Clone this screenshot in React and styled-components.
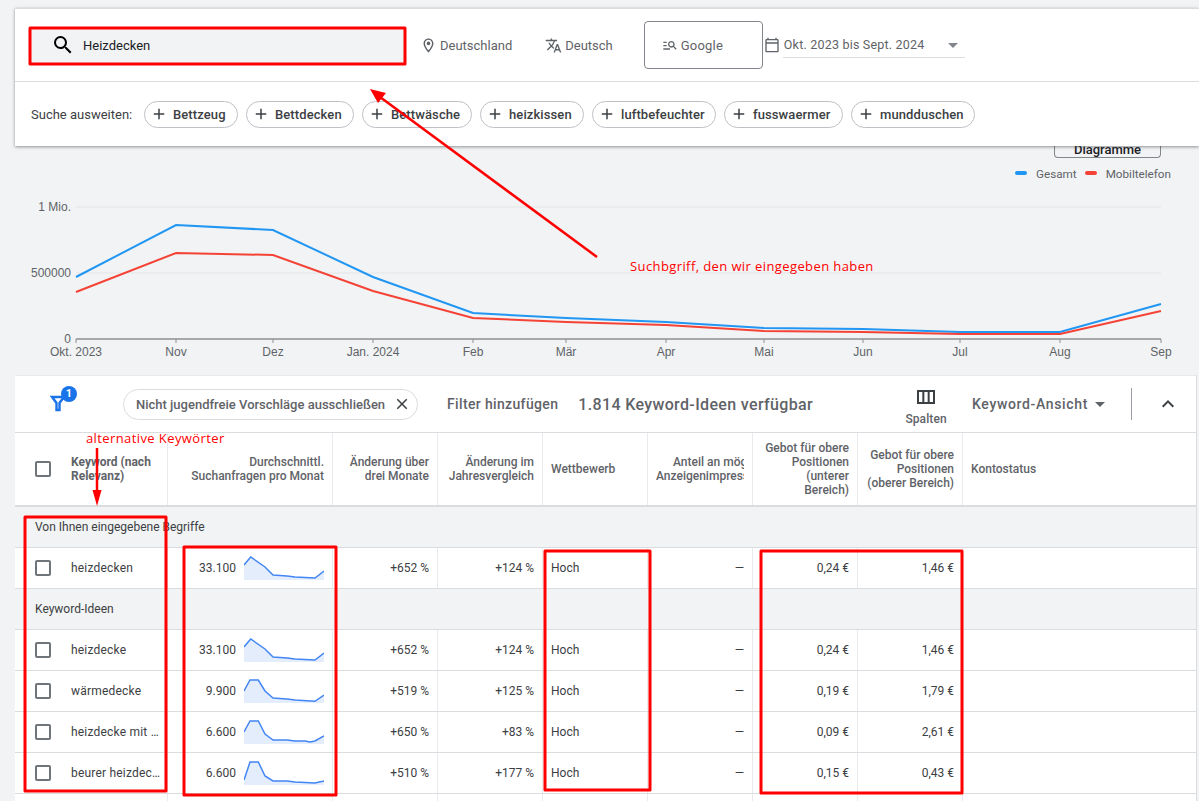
import React from 'react';
import styled, { createGlobalStyle } from 'styled-components';
import {
  MdSearch,
  MdOutlineLocationOn,
  MdOutlineTranslate,
  MdManageSearch,
  MdOutlineCalendarToday,
  MdArrowDropDown,
  MdAdd,
  MdClose,
  MdOutlineViewColumn,
  MdKeyboardArrowUp,
} from 'react-icons/md';

const GlobalStyle = createGlobalStyle`
  html, body {
    margin: 0;
    padding: 0;
    background: #f1f3f4;
    height: 100%;
    overflow: hidden;
  }
  * { box-sizing: border-box; }
`;

const Page = styled.div`
  position: relative;
  width: 1199px;
  height: 801px;
  overflow: hidden;
  padding: 8px 0 0 15px;
  font-family: Roboto, "Liberation Sans", sans-serif;
  color: #3c4043;
`;

const Header = styled.header`
  position: relative;
  z-index: 2;
  background: #fff;
  border-top: 1px solid #dadce0;
  box-shadow: 0 1px 3px rgba(60, 64, 67, 0.55);
`;

const TopRow = styled.div`
  display: flex;
  align-items: center;
  height: 73px;
  border-bottom: 1px solid #dadce0;
`;

const SearchBox = styled.div`
  display: flex;
  align-items: center;
  width: 375px;
  height: 36px;
  margin-left: 15px;
  padding-left: 21px;
  gap: 8px;
  background: #f1f3f4;
  font-size: 13px;
  color: #202124;
  svg { font-size: 24px; color: #000; }
`;

const Setting = styled.div`
  display: flex;
  align-items: center;
  gap: ${(p) => p.$gap}px;
  margin-left: ${(p) => p.$left}px;
  font-size: 13px;
  color: #5f6368;
  svg { font-size: 17px; }
`;

const NetworkBox = styled.div`
  display: flex;
  align-items: center;
  gap: 3px;
  width: 119px;
  height: 48px;
  margin-left: 31px;
  padding-left: 17px;
  border: 1px solid #80868b;
  border-radius: 4px;
  font-size: 13px;
  letter-spacing: 0.2px;
  color: #5f6368;
  svg { font-size: 16px; }
`;

const CalendarIcon = styled.div`
  display: flex;
  margin-left: 1px;
  color: #5f6368;
  font-size: 16px;
`;

const DateSelect = styled.div`
  display: flex;
  align-items: center;
  justify-content: space-between;
  width: 182px;
  height: 26px;
  margin-left: 3px;
  padding-left: 1px;
  border-bottom: 1px solid #dadce0;
  font-size: 12.5px;
  letter-spacing: 0.2px;
  color: #5f6368;
  svg { font-size: 24px; color: #80868b; }
`;

const ChipRow = styled.div`
  display: flex;
  align-items: center;
  height: 64px;
  padding-left: 16px;
  gap: 8px;
`;

const ChipLabel = styled.span`
  width: 105px;
  font-size: 13px;
  color: #3c4043;
  white-space: nowrap;
`;

const Chip = styled.div`
  display: flex;
  align-items: center;
  height: 27px;
  width: ${(p) => p.$w}px;
  padding-left: 5px;
  gap: 5px;
  border: 1px solid #bdc1c6;
  border-radius: 14px;
  font-size: 13px;
  font-weight: 500;
  letter-spacing: 0.1px;
  white-space: nowrap;
  color: #3c4043;
  svg { font-size: 18px; flex: none; }
`;

const ChartSection = styled.section`
  position: relative;
  height: 228px;
`;

const DiagramButton = styled.div`
  position: absolute;
  right: 38px;
  top: -3px;
  width: 107px;
  height: 15px;
  border: 1px solid #80868b;
  border-top: 0;
  border-radius: 0 0 4px 4px;
  text-align: center;
  font-size: 13px;
  font-weight: 500;
  line-height: 13px;
  color: #202124;
`;

const ChartSvg = styled.svg`
  display: block;
  margin-left: -15px;
  font-family: "Liberation Sans", Arial, sans-serif;
  font-size: 12px;
  fill: #5f6368;
`;

const Legend = styled.div`
  position: absolute;
  top: 21px;
  right: 28px;
  display: flex;
  align-items: center;
  font-size: 11.7px;
  color: #5f6368;
`;

const LegendDot = styled.i`
  display: block;
  width: 12px;
  height: 4px;
  border-radius: 2px;
  margin: 0 9px 2px 8px;
  background: ${(p) => p.$color};
`;

const TablePanel = styled.section`
  margin: 1px 2px 0 0;
  border-right: 1px solid #dadce0;
`;

const Toolbar = styled.div`
  display: flex;
  align-items: center;
  height: 58px;
  background: #fff;
  border-top: 1px solid #e8eaed;
  border-bottom: 1px solid #dadce0;
`;

const FilterIcon = styled.div`
  position: relative;
  width: 30px;
  height: 32px;
  margin-left: 35px;
`;

const Badge = styled.span`
  position: absolute;
  left: 11px;
  top: -2px;
  width: 16px;
  height: 16px;
  border-radius: 50%;
  background: #1a73e8;
  color: #fff;
  font-size: 11px;
  font-weight: 700;
  line-height: 16px;
  text-align: center;
`;

const FilterChip = styled.div`
  display: flex;
  align-items: center;
  justify-content: space-between;
  width: 295px;
  height: 31px;
  margin-left: 43px;
  padding: 0 6px 0 12px;
  border: 1px solid #dadce0;
  border-radius: 16px;
  font-size: 13px;
  font-weight: 500;
  color: #5f6368;
  white-space: nowrap;
  svg { font-size: 18px; color: #3c4043; flex: none; }
`;

const AddFilter = styled.span`
  margin-left: 29px;
  font-size: 14px;
  font-weight: 500;
  letter-spacing: 0.35px;
  color: #5f6368;
`;

const IdeaCount = styled.span`
  margin-left: 20px;
  font-size: 16px;
  font-weight: 500;
  letter-spacing: 0.35px;
  color: #5f6368;
`;

const ColumnsButton = styled.div`
  display: flex;
  flex-direction: column;
  align-items: center;
  margin: 2px 0 0 91px;
  width: 44px;
  font-size: 12px;
  font-weight: 500;
  letter-spacing: 0.1px;
  color: #5f6368;
  svg { font-size: 24px; color: #3c4043; margin-bottom: 3px; }
`;

const ViewSelect = styled.div`
  display: flex;
  align-items: center;
  margin-left: 24px;
  font-size: 14px;
  font-weight: 500;
  letter-spacing: 0.65px;
  color: #5f6368;
  svg { font-size: 24px; }
`;

const Divider = styled.div`
  width: 1px;
  height: 32px;
  margin-left: 19px;
  background: #9aa0a6;
`;

const CollapseIcon = styled.div`
  display: flex;
  margin-left: 24px;
  font-size: 24px;
  color: #3c4043;
`;

const Grid = styled.div`
  display: grid;
  grid-template-columns: 153px 165px 105px 105px 105px 105px 105px 105px 1fr;
  height: ${(p) => p.$h}px;
  background: #fff;
  border-bottom: ${(p) => (p.$thick ? '2px solid #dadce0' : '1px solid #dadce0')};
`;

const Cell = styled.div`
  display: flex;
  align-items: center;
  justify-content: ${(p) => (p.$right ? 'flex-end' : 'flex-start')};
  min-width: 0;
  padding: 0 8px;
  border-right: ${(p) => (p.$last ? 'none' : '1px solid #e8eaed')};
  font-size: 12px;
  color: #3c4043;
  overflow: hidden;
`;

const HeadCell = styled(Cell)`
  font-weight: 500;
  line-height: 14px;
  color: #5f6368;
  text-align: ${(p) => (p.$right ? 'right' : 'left')};
`;

const ClippedLabel = styled.span`
  display: block;
  width: 88px;
  flex: none;
  overflow: hidden;
  white-space: nowrap;
  text-align: left;
`;

const ClippedLine = styled.span`
  display: block;
  padding-left: ${(p) => p.$indent}px;
`;

const KeywordCell = styled(Cell)`
  padding: 0 0 0 20px;
  gap: 20px;
`;

const KeywordHead = styled(KeywordCell)`
  font-weight: 700;
  line-height: 14px;
  color: #5f6368;
`;

const KeywordText = styled.span`
  width: 90px;
  overflow: hidden;
  white-space: nowrap;
  text-overflow: ellipsis;
  letter-spacing: 0.2px;
`;

const Check = styled.span`
  flex: none;
  width: 16px;
  height: 16px;
  border: 2px solid #70757a;
  border-radius: 2px;
`;

const VolumeCell = styled(Cell)`
  gap: 8px;
  justify-content: flex-end;
`;

const Spark = styled.svg`
  display: block;
  flex: none;
`;

const GroupRow = styled.div`
  display: flex;
  align-items: center;
  height: 41px;
  padding-left: 20px;
  border-bottom: 1px solid #dadce0;
  font-size: 12px;
  color: #3c4043;
`;

const Overlay = styled.svg`
  position: absolute;
  left: 0;
  top: 0;
  z-index: 5;
  pointer-events: none;
`;

const Note = styled.text`
  font-family: "Open Sans", "DejaVu Sans", sans-serif;
  font-size: 13px;
  letter-spacing: 0.4px;
  fill: #f00;
`;

const months = [
  ['Okt. 2023', 76], ['Nov', 176], ['Dez', 273], ['Jan. 2024', 373], ['Feb', 473], ['Mär', 566],
  ['Apr', 666], ['Mai', 764], ['Jun', 863], ['Jul', 960], ['Aug', 1060], ['Sep', 1161],
];
const blue = [277, 225, 230, 277, 313, 318, 322, 328, 329, 332, 332, 304];
const red = [292, 253, 255, 291, 318, 322, 325, 331, 332, 334, 334, 311];
const toLine = (ys) => ys.map((y, i) => `${months[i][1]},${y - 146}`).join(' ');

const chips = [
  ['Bettzeug', 94], ['Bettdecken', 108], ['Bettwäsche', 110], ['heizkissen', 104],
  ['luftbefeuchter', 124], ['fusswaermer', 119], ['mundduschen', 124],
];

const sparkA = [[0, 9], [6.7, 1], [21, 11], [29, 19], [43, 20], [51, 21], [61, 21.5], [71, 22], [80, 15]];
const sparkB = [[0, 12], [6, 1], [14.3, 1], [21, 12], [29, 19], [43, 20], [51, 21], [71, 22.3], [80, 16]];
const sparkC = [[0, 12], [6, 1], [14.3, 1], [21, 14], [29, 20], [43, 20], [51, 21], [61, 21], [66, 22], [71, 21], [80, 16]];
const sparkD = [[0, 19], [6, 1], [14.3, 1], [21, 15], [29, 20], [43, 20], [51, 21], [71, 22], [80, 20]];

const rowTop = { keyword: 'heizdecken', volume: '33.100', spark: sparkA, three: '+652 %', year: '+124 %', low: '0,24 €', high: '1,46 €' };
const rows = [
  { keyword: 'heizdecke', volume: '33.100', spark: sparkA, three: '+652 %', year: '+124 %', low: '0,24 €', high: '1,46 €' },
  { keyword: 'wärmedecke', volume: '9.900', spark: sparkB, three: '+519 %', year: '+125 %', low: '0,19 €', high: '1,79 €' },
  { keyword: 'heizdecke mit timer', volume: '6.600', spark: sparkC, three: '+650 %', year: '+83 %', low: '0,09 €', high: '2,61 €' },
  { keyword: 'beurer heizdecke', volume: '6.600', spark: sparkD, three: '+510 %', year: '+177 %', low: '0,15 €', high: '0,43 €' },
];

const Sparkline = ({ points }) => {
  const line = points.map((p) => p.join(',')).join(' ');
  return (
    <Spark width="80" height="24" viewBox="0 0 80 24">
      <polygon points={`0,24 ${line} 80,24`} fill="#e4edfb" />
      <polyline points={line} fill="none" stroke="#4285f4" strokeWidth="1.5" />
    </Spark>
  );
};

const KeywordRow = ({ row }) => (
  <Grid $h={41}>
    <KeywordCell><Check /><KeywordText>{row.keyword}</KeywordText></KeywordCell>
    <VolumeCell>{row.volume}<Sparkline points={row.spark} /></VolumeCell>
    <Cell $right>{row.three}</Cell>
    <Cell $right>{row.year}</Cell>
    <Cell>Hoch</Cell>
    <Cell $right>—</Cell>
    <Cell $right>{row.low}</Cell>
    <Cell $right>{row.high}</Cell>
    <Cell $last />
  </Grid>
);

export default function App() {
  return (
    <Page>
      <GlobalStyle />
      <Header>
        <TopRow>
          <SearchBox><MdSearch />Heizdecken</SearchBox>
          <Setting $left={15} $gap={3}><MdOutlineLocationOn />Deutschland</Setting>
          <Setting $left={33} $gap={3}><MdOutlineTranslate />Deutsch</Setting>
          <NetworkBox><MdManageSearch />Google</NetworkBox>
          <CalendarIcon><MdOutlineCalendarToday /></CalendarIcon>
          <DateSelect>Okt. 2023 bis Sept. 2024<MdArrowDropDown /></DateSelect>
        </TopRow>
        <ChipRow>
          <ChipLabel>Suche ausweiten:</ChipLabel>
          {chips.map(([label, w]) => (
            <Chip key={label} $w={w}><MdAdd />{label}</Chip>
          ))}
        </ChipRow>
      </Header>

      <ChartSection>
        <DiagramButton>Diagramme</DiagramButton>
        <Legend>
          <LegendDot $color="#2196f3" />Gesamt
          <LegendDot $color="#f44336" />Mobiltelefon
        </Legend>
        <ChartSvg width="1199" height="228" viewBox="0 0 1199 228">
          <line x1="76" x2="1161" y1="61" y2="61" stroke="#e8eaed" strokeWidth="1.5" />
          <line x1="76" x2="1161" y1="127" y2="127" stroke="#e8eaed" strokeWidth="1.5" />
          <line x1="76" x2="1161" y1="193" y2="193" stroke="#8f8f8f" strokeWidth="1.5" />
          <text x="71" y="65" textAnchor="end">1 Mio.</text>
          <text x="71" y="131" textAnchor="end">500000</text>
          <text x="71" y="197" textAnchor="end">0</text>
          {months.map(([label, x]) => (
            <g key={label}>
              <line x1={x} x2={x} y1="193" y2="197" stroke="#8f8f8f" />
              <text x={x} y="210" textAnchor="middle">{label}</text>
            </g>
          ))}
          <polyline points={toLine(blue)} fill="none" stroke="#2196f3" strokeWidth="2" />
          <polyline points={toLine(red)} fill="none" stroke="#f44336" strokeWidth="2" />
        </ChartSvg>
      </ChartSection>

      <TablePanel>
        <Toolbar>
          <FilterIcon>
            <svg width="30" height="32" viewBox="0 0 30 32">
              <path d="M2 9h12l-4.5 6v7h-3v-7z" fill="none" stroke="#1a73e8" strokeWidth="2.4" />
            </svg>
            <Badge>1</Badge>
          </FilterIcon>
          <FilterChip>Nicht jugendfreie Vorschläge ausschließen<MdClose /></FilterChip>
          <AddFilter>Filter hinzufügen</AddFilter>
          <IdeaCount>1.814 Keyword-Ideen verfügbar</IdeaCount>
          <ColumnsButton><MdOutlineViewColumn />Spalten</ColumnsButton>
          <ViewSelect>Keyword-Ansicht<MdArrowDropDown /></ViewSelect>
          <Divider />
          <CollapseIcon><MdKeyboardArrowUp /></CollapseIcon>
        </Toolbar>

        <Grid $h={74} $thick>
          <KeywordHead><Check /><span>Keyword (nach Relevanz)</span></KeywordHead>
          <HeadCell $right>Durchschnittl.<br />Suchanfragen pro Monat</HeadCell>
          <HeadCell $right>Änderung über<br />drei Monate</HeadCell>
          <HeadCell $right>Änderung im<br />Jahresvergleich</HeadCell>
          <HeadCell>Wettbewerb</HeadCell>
          <HeadCell $right>
            <ClippedLabel>
              <ClippedLine $indent={17}>Anteil an möglichen</ClippedLine>
              <ClippedLine $indent={0}>Anzeigenimpressionen</ClippedLine>
            </ClippedLabel>
          </HeadCell>
          <HeadCell $right>Gebot für obere Positionen (unterer Bereich)</HeadCell>
          <HeadCell $right>Gebot für obere Positionen (oberer Bereich)</HeadCell>
          <HeadCell $last>Kontostatus</HeadCell>
        </Grid>

        <GroupRow>Von Ihnen eingegebene Begriffe</GroupRow>
        <KeywordRow row={rowTop} />
        <GroupRow>Keyword-Ideen</GroupRow>
        {rows.map((row) => <KeywordRow key={row.keyword} row={row} />)}
        <Grid $h={20}>
          <Cell /><Cell /><Cell /><Cell /><Cell /><Cell /><Cell /><Cell /><Cell $last />
        </Grid>
      </TablePanel>

      <Overlay width="1199" height="801" viewBox="0 0 1199 801">
        <g fill="none" stroke="#f00" strokeWidth="3" strokeLinejoin="round">
          <rect x="30" y="28" width="375" height="36" />
          <rect x="25" y="517" width="141" height="274" />
          <rect x="184" y="547" width="152" height="248" />
          <rect x="545" y="551" width="105" height="239" />
          <rect x="761" y="551" width="201" height="242" />
        </g>
        <line x1="597" y1="257" x2="380" y2="97" stroke="#f00" strokeWidth="2.5" />
        <polygon points="370,89 386,93 378,103" fill="#f00" />
        <line x1="97" y1="448" x2="97" y2="492" stroke="#f00" strokeWidth="2.5" />
        <polygon points="97,506 92.5,490 101.5,490" fill="#f00" />
        <Note x="630" y="271">Suchbgriff, den wir eingegeben haben</Note>
        <Note x="86" y="443">alternative Keywörter</Note>
      </Overlay>
    </Page>
  );
}
